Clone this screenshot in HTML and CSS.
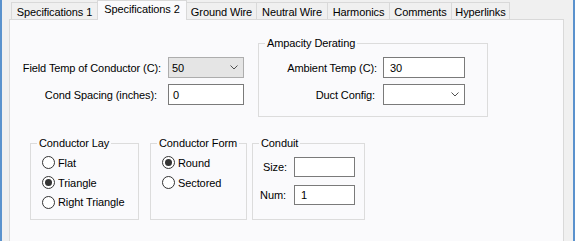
FILE: index.html
```html
<!DOCTYPE html>
<html>
<head>
<meta charset="utf-8">
<link rel="stylesheet" href="styles.css">
</head>
<body>
<div class="window">
  <div class="tabs">
    <div class="tab w-s1">Specifications 1</div>
    <div class="tab active w-s2">Specifications 2</div>
    <div class="tab w-gw">Ground Wire</div>
    <div class="tab w-nw">Neutral Wire</div>
    <div class="tab w-ha">Harmonics</div>
    <div class="tab w-co">Comments</div>
    <div class="tab w-hy">Hyperlinks</div>
  </div>
  <div class="panel">
    <div class="row1">
      <div class="form main-form">
        <span class="lbl">Field Temp of Conductor (C):</span>
        <div class="ctl select grey"><span class="val">50</span><svg class="chev" width="8" height="5" viewBox="0 0 8 5"><polyline points="0.5,0.5 4,4 7.5,0.5" fill="none" stroke="#505050" stroke-width="1"/></svg></div>
        <span class="lbl lbl-cond">Cond Spacing (inches):</span>
        <div class="ctl input"><span class="val">0</span></div>
      </div>
      <fieldset class="group amp">
        <legend>Ampacity Derating</legend>
        <div class="form amp-form">
          <span class="lbl">Ambient Temp (C):</span>
          <div class="ctl input pad6"><span class="val">30</span></div>
          <span class="lbl lbl-duct">Duct Config:</span>
          <div class="ctl select"><span class="val"></span><svg class="chev" width="8" height="5" viewBox="0 0 8 5"><polyline points="0.5,0.5 4,4 7.5,0.5" fill="none" stroke="#505050" stroke-width="1"/></svg></div>
        </div>
      </fieldset>
    </div>
    <div class="row2">
      <fieldset class="group lay">
        <legend>Conductor Lay</legend>
        <div class="radios">
          <div class="radio-row"><span class="radio"></span>Flat</div>
          <div class="radio-row"><span class="radio on"></span>Triangle</div>
          <div class="radio-row"><span class="radio"></span>Right Triangle</div>
        </div>
      </fieldset>
      <fieldset class="group cform">
        <legend>Conductor Form</legend>
        <div class="radios">
          <div class="radio-row"><span class="radio on"></span>Round</div>
          <div class="radio-row"><span class="radio"></span>Sectored</div>
        </div>
      </fieldset>
      <fieldset class="group conduit">
        <legend>Conduit</legend>
        <div class="form conduit-form">
          <span class="lbl">Size:</span>
          <div class="ctl input pad6"><span class="val"></span></div>
          <span class="lbl lbl-num">Num:</span>
          <div class="ctl input pad6"><span class="val">1</span></div>
        </div>
      </fieldset>
    </div>
  </div>
</div>
</body>
</html>
```

FILE: styles.css
```css
* { box-sizing: border-box; }
html, body { margin: 0; padding: 0; }
body {
  width: 575px;
  height: 241px;
  overflow: hidden;
  font-family: "Liberation Sans", Arial, sans-serif;
  font-size: 11px;
  letter-spacing: -0.1px;
  color: #000;
  background: #f0f0f0;
}
.window {
  width: 575px;
  height: 241px;
  overflow: hidden;
  background: #f0f0f0;
  border-left: 2px solid #5a92cd;
  border-right: 2px solid #5a92cd;
  padding-left: 7px;
  padding-right: 9px;
}
.tabs {
  display: flex;
  align-items: flex-end;
  height: 19px;
  padding-left: 2px;
}
.tab {
  height: 17px;
  border: 1px solid #d9d9d9;
  border-bottom: none;
  margin-right: -1px;
  background: #f0f0f0;
  display: flex;
  align-items: center;
  justify-content: center;
  white-space: nowrap;
  line-height: 14px;
  padding-top: 1px;
}
.tab.active {
  height: 20px;
  margin-bottom: -1px;
  background: #fafafc;
  position: relative;
  z-index: 1;
  padding-top: 0;
  padding-bottom: 4px;
}
.w-s1 { width: 87px; }
.w-s2 { width: 90px; }
.w-gw { width: 71px; }
.w-nw { width: 72px; }
.w-ha { width: 63px; }
.w-co { width: 63px; }
.w-hy { width: 59px; }

.panel {
  background: #fafafc;
  border: 1px solid #d9d9d9;
  height: 260px;
}
.row1 {
  display: flex;
  align-items: flex-start;
}
.form {
  display: grid;
  align-items: center;
}
.lbl {
  text-align: right;
  white-space: nowrap;
  line-height: 14px;
}
.main-form {
  margin-left: 8px;
  margin-top: 37px;
  grid-template-columns: 143px 76px;
  grid-auto-rows: 21px;
  column-gap: 7px;
  row-gap: 6px;
}
.lbl-cond { padding-right: 4px; }
.lbl-duct { padding-right: 2px; }
.lbl-num { padding-right: 1px; }

.ctl {
  height: 100%;
  border: 1px solid #7a7a7a;
  background: #fff;
  display: flex;
  align-items: center;
  padding-left: 4px;
  line-height: 14px;
}
.ctl.pad6 { padding-left: 6px; }
.select {
  justify-content: space-between;
  padding-right: 5px;
}
.select.grey {
  background: #e5e5e5;
  border-color: #adadad;
  padding-left: 3px;
}
.chev { display: block; }

.group {
  margin: 0;
  padding: 0;
  min-width: 0;
  border: 1px solid #dcdcdc;
}
.group legend {
  margin-left: 6px;
  padding: 0 2px;
  line-height: 14px;
  font-size: 11px;
}
.amp {
  margin-left: 14px;
  margin-top: 16px;
  width: 230px;
  height: 81px;
}
.amp-form {
  padding-top: 7px;
  grid-template-columns: 118px 82px;
  grid-auto-rows: 21px;
  column-gap: 6px;
  row-gap: 6px;
}

.row2 {
  display: flex;
  align-items: flex-start;
  margin-top: 19px;
  margin-left: 20px;
}
.row2 .group { height: 84px; }
.lay { width: 109px; margin-right: 11px; }
.cform { width: 97px; margin-right: 5px; }
.conduit { width: 113px; }

.radios {
  padding-top: 3px;
  padding-left: 11px;
}
.radio-row {
  display: flex;
  align-items: center;
  height: 19.75px;
  white-space: nowrap;
}
.radio {
  width: 13px;
  height: 13px;
  border: 1px solid #333;
  border-radius: 50%;
  background: #fff;
  margin-right: 3px;
  display: flex;
  align-items: center;
  justify-content: center;
  flex: none;
}
.radio.on::after {
  content: "";
  width: 7px;
  height: 7px;
  border-radius: 50%;
  background: #333;
}
.conduit-form {
  padding-top: 7px;
  grid-template-columns: 34px 61px;
  grid-auto-rows: 20px;
  column-gap: 7px;
  row-gap: 8px;
}
```
